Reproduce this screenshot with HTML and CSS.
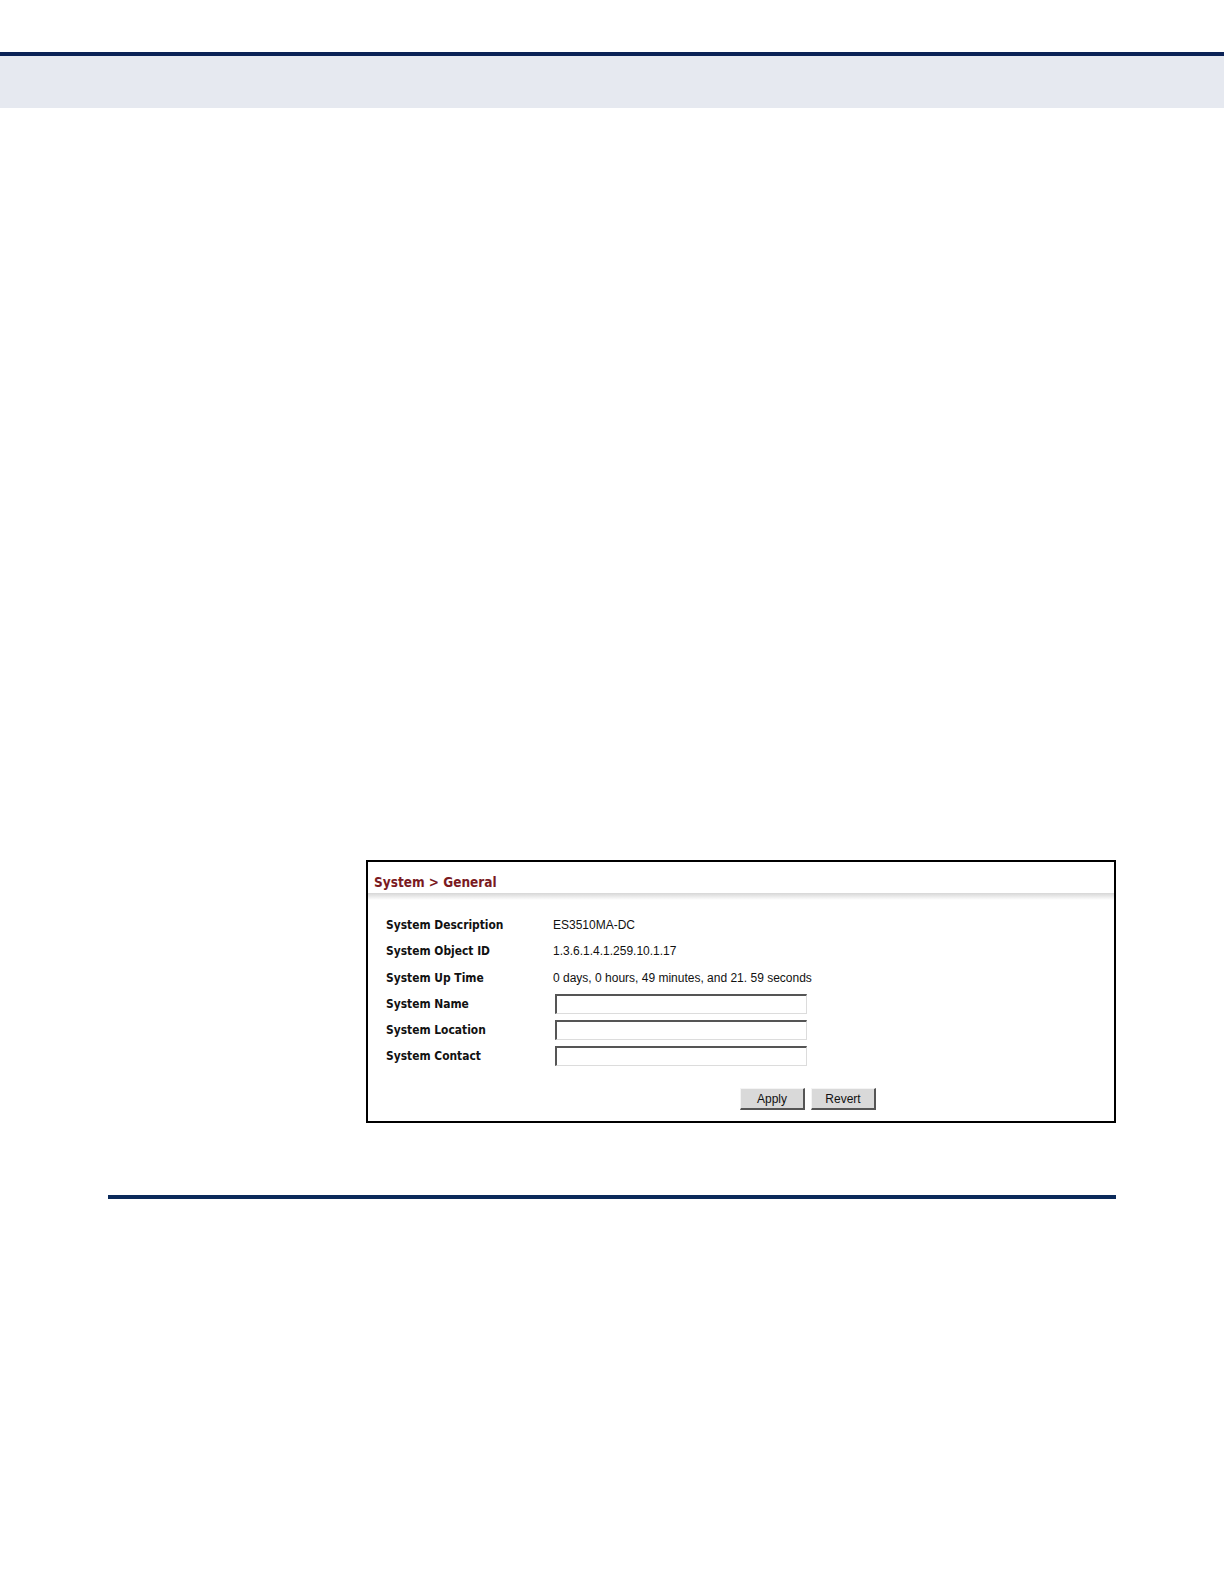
FILE: index.html
```html
<!DOCTYPE html>
<html>
<head>
<meta charset="utf-8">
<link rel="stylesheet" href="styles.css">
</head>
<body>
<div class="top-space"></div>
<div class="top-rule"></div>
<div class="top-band"></div>
<div class="content">
  <div class="panel">
    <div class="panel-title">System &gt; General</div>
    <div class="panel-sep"></div>
    <div class="rows">
      <div class="row"><div class="label">System Description</div><div class="value">ES3510MA-DC</div></div>
      <div class="row"><div class="label">System Object ID</div><div class="value">1.3.6.1.4.1.259.10.1.17</div></div>
      <div class="row"><div class="label">System Up Time</div><div class="value">0 days, 0 hours, 49 minutes, and 21. 59 seconds</div></div>
      <div class="row"><div class="label">System Name</div><div class="value"><span class="field"></span></div></div>
      <div class="row"><div class="label">System Location</div><div class="value"><span class="field"></span></div></div>
      <div class="row"><div class="label">System Contact</div><div class="value"><span class="field"></span></div></div>
    </div>
    <div class="buttons">
      <span class="btn">Apply</span>
      <span class="btn">Revert</span>
    </div>
  </div>
</div>
<div class="bottom-rule"></div>
</body>
</html>
```

FILE: styles.css
```css
html, body {
  margin: 0;
  padding: 0;
  background: #ffffff;
  font-family: "Liberation Sans", Arial, sans-serif;
}
.top-space { height: 52px; }
.top-rule { height: 4px; background: #0b2256; }
.top-band { height: 52px; background: #e6e9f0; }
.content {
  padding-top: 752px;
  padding-left: 366px;
}
.panel {
  width: 746px;
  border: 2px solid #000000;
  background: #ffffff;
}
.panel-title {
  height: 31px;
  box-sizing: border-box;
  padding: 12px 0 0 6px;
  line-height: 16px;
  font-family: "DejaVu Sans Condensed", "DejaVu Sans", Verdana, sans-serif;
  font-stretch: condensed;
  font-size: 13.5px;
  font-weight: bold;
  color: #7a1a1f;
}
.panel-sep {
  height: 7px;
  background: linear-gradient(#d6d6d6, #eeeeee 60%, #ffffff);
}
.rows {
  padding: 12px 0 0 18px;
}
.row {
  display: flex;
  align-items: center;
  height: 26.25px;
}
.label {
  width: 167px;
  font-family: "DejaVu Sans Condensed", "DejaVu Sans", Verdana, sans-serif;
  font-stretch: condensed;
  font-size: 11.9px;
  font-weight: bold;
  color: #111111;
}
.value {
  font-size: 12px;
  color: #111111;
}
.field {
  display: block;
  margin-left: 2px;
  width: 249px;
  height: 17px;
  border-style: solid;
  border-width: 2px 1px 1px 2px;
  border-color: #555555 #dcdcdc #dcdcdc #555555;
  background: #ffffff;
}
.buttons {
  display: flex;
  gap: 6px;
  padding: 18.5px 0 11px 372px;
}
.btn {
  display: block;
  box-sizing: border-box;
  width: 65px;
  height: 22px;
  line-height: 20px;
  text-align: center;
  font-size: 12px;
  color: #111111;
  background: #d9d9d9;
  border-style: solid;
  border-width: 1px 2px 2px 1px;
  border-color: #f4f4f4 #555555 #555555 #f4f4f4;
}
.bottom-rule {
  margin: 72px 0 0 108px;
  width: 1008px;
  height: 4px;
  background: #0b2a5a;
}
```
